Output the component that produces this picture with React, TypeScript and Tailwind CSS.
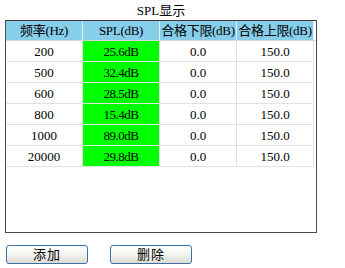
import React from "react";

const rows = [
  ["200", "25.6dB"],
  ["500", "32.4dB"],
  ["600", "28.5dB"],
  ["800", "15.4dB"],
  ["1000", "89.0dB"],
  ["20000", "29.8dB"],
];

const font = { fontFamily: '"Liberation Serif", "Noto Sans CJK SC", serif' };

export default function App() {
  return (
    <div className="w-[345px] h-[268px] bg-white text-black text-[13px] leading-none" style={font}>
      <div className="w-[322px] h-[20px] flex items-center justify-center pt-[1px]">SPL显示</div>
      <div className="ml-[5px] w-[312px] h-[213px] border border-[#4a4a4a] border-t-[#3a3a3a] bg-white">
        <div className="flex h-[20px] border-b border-[#d8d8d8]">
          {["频率(Hz)", "SPL(dB)", "合格下限(dB)", "合格上限(dB)"].map((h) => (
            <div
              key={h}
              className="w-[77px] h-[19px] bg-[#87ceeb] border-r border-[#e8eef2] flex items-center justify-center whitespace-nowrap tracking-[-0.3px]"
            >
              {h}
            </div>
          ))}
        </div>
        {rows.map(([f, v]) => (
          <div key={f} className="flex h-[21px] w-[308px] border-b border-[#e2e2e2]">
            <div className="w-[77px] h-[20px] border-r border-[#e2e2e2] flex items-center justify-center">{f}</div>
            <div className="w-[77px] h-[20px] border-r border-[#e2e2e2] bg-[#00ff00] flex items-center justify-center tracking-[-0.5px]">{v}</div>
            <div className="w-[77px] h-[20px] border-r border-[#e2e2e2] flex items-center justify-center">0.0</div>
            <div className="w-[77px] h-[20px] border-r border-[#e2e2e2] flex items-center justify-center">150.0</div>
          </div>
        ))}
      </div>
      <div className="flex gap-[22px] ml-[6px] mt-[12px]">
        {["添加", "删除"].map((b) => (
          <div
            key={b}
            className="w-[82px] h-[19px] rounded-[3px] border border-[#3d6ea5] bg-gradient-to-b from-white via-[#f4f4f0] to-[#dcdcd4] flex items-center justify-center text-[13px] tracking-[1px]"
          >
            {b}
          </div>
        ))}
      </div>
    </div>
  );
}
